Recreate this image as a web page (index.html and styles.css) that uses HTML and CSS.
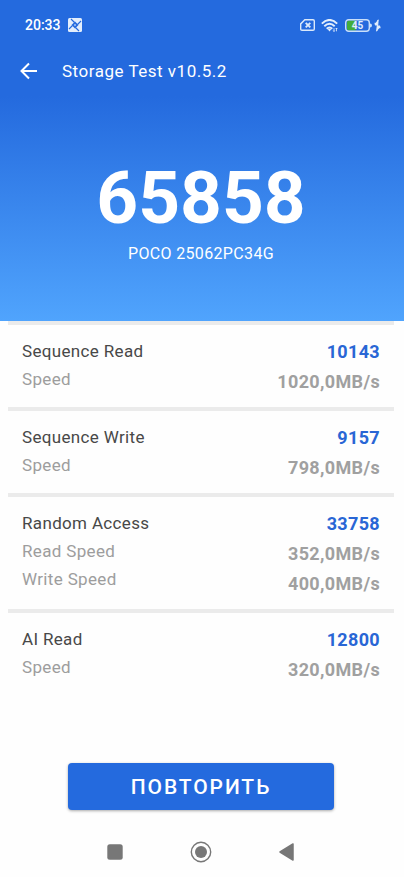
FILE: index.html
```html
<!DOCTYPE html>
<html lang="ru">
<head>
<meta charset="utf-8">
<meta name="viewport" content="width=device-width, initial-scale=1">
<title>Storage Test</title>
<link rel="stylesheet" href="styles.css">
</head>
<body>
<header class="hero">
  <div class="status">
    <div class="status-group">
      <span>20:33</span>
      <svg width="14" height="14" viewBox="0 0 14 14" aria-hidden="true">
        <rect width="14" height="14" rx="1.500" fill="#e3eefc"/>
        <path d="M7 3.500 10.500 7 7 10.500 3.500 7Z" fill="#246ade"/>
        <path d="M3 1 6.500 4.500M13 3 9.500 6.500M11 13 7.500 9.500M1 11 4.500 7.500" stroke="#246ade" stroke-width="1.100"/>
        <path d="M7 5.800 8.200 7 7 8.200 5.800 7Z" fill="#a9c8f5"/>
      </svg>
    </div>
    <div class="status-group status-icons">
      <svg width="15" height="12" viewBox="0 0 15 12" fill="none" stroke="#dbe9fb" aria-hidden="true">
        <path d="M4.800.8H13Q14.300.8 14.300 2V10Q14.300 11.200 13 11.200H2Q.7 11.200.7 10V4.900Z" stroke-width="1.400"/>
        <path d="M5.700 3.800 10.300 8.400M10.300 3.800 5.700 8.400" stroke-width="1.900"/>
      </svg>
      <svg width="18" height="13" viewBox="0 0 18 13" fill="none" stroke="#e3eefc" stroke-width="1.900" aria-hidden="true">
        <path d="M.8 4.600Q8.500-2.800 16.200 4.600M3.300 7.300Q8.500 2.400 13.700 7.300M5.700 9.700Q8.500 7.200 11.300 9.700"/>
        <path d="M6.700 10.300Q8.500 9 10.300 10.300L8.500 12.500Z" fill="#e3eefc" stroke="none"/>
        <path d="M13 9.200V12.500M15.500 9V12.300M12.200 11.500 13 12.500 13.800 11.500M14.700 10 15.500 9 16.300 10" stroke-width=".8"/>
      </svg>
      <svg width="36" height="13" viewBox="0 0 36 13" aria-hidden="true">
        <path d="M4 1.500H11V11.500H4Q2 11.500 2 9.500V3.500Q2 1.500 4 1.500Z" fill="#43ad3c"/>
        <rect x=".7" y=".7" width="23.600" height="11.600" rx="3" fill="none" stroke="#c9dffa" stroke-width="1.400"/>
        <path d="M25 4.500Q27 4.500 27 6.500T25 8.500Z" fill="#c9dffa"/>
        <text class="battery-text" x="12.500" y="10">45</text>
        <path d="M33.200.8 30 6H32.300L31.600 12.200 35 7H32.700Z" fill="#e3eefc" stroke="#e3eefc" stroke-width=".9"/>
        <path d="M29.600 4.500H32M33 8.500H35.500" stroke="#e3eefc" stroke-width="1.300"/>
      </svg>
    </div>
  </div>
  <div class="toolbar">
    <button class="back" type="button" aria-label="Back">
      <svg width="18" height="18" viewBox="0 0 18 18" fill="none" stroke="#fff" stroke-width="2" aria-hidden="true"><path d="M17 9H2M9 1.500 1.500 9 9 16.500"/></svg>
    </button>
    <h1 class="title">Storage Test v10.5.2</h1>
  </div>
  <div class="score">65858</div>
  <div class="device">POCO 25062PC34G</div>
</header>
<main class="results">
  <section class="result">
    <div class="labels"><h2>Sequence Read</h2><p>Speed</p></div>
    <div class="values"><strong>10143</strong><span>1020,0MB/s</span></div>
  </section>
  <section class="result">
    <div class="labels"><h2>Sequence Write</h2><p>Speed</p></div>
    <div class="values"><strong>9157</strong><span>798,0MB/s</span></div>
  </section>
  <section class="result">
    <div class="labels"><h2>Random Access</h2><p>Read Speed</p><p>Write Speed</p></div>
    <div class="values"><strong>33758</strong><span>352,0MB/s</span><span>400,0MB/s</span></div>
  </section>
  <section class="result">
    <div class="labels"><h2>AI Read</h2><p>Speed</p></div>
    <div class="values"><strong>12800</strong><span>320,0MB/s</span></div>
  </section>
</main>
<footer class="footer">
  <button class="repeat" type="button">ПОВТОРИТЬ</button>
  <nav class="system-nav">
    <button type="button" aria-label="Recent apps"><svg width="22" height="22" viewBox="0 0 22 22"><rect x="3.300" y="3.300" width="15.400" height="15.400" rx="2.500" fill="#777"/></svg></button>
    <button type="button" aria-label="Home"><svg width="22" height="22" viewBox="0 0 22 22"><circle cx="11" cy="11" r="9.700" fill="none" stroke="#777" stroke-width="1.400"/><circle cx="11" cy="11" r="6" fill="#777"/></svg></button>
    <button type="button" aria-label="Back"><svg width="22" height="22" viewBox="0 0 22 22"><path d="M4 11 17 3V19Z" fill="#777" stroke="#777" stroke-width="1.500" stroke-linejoin="round"/></svg></button>
  </nav>
</footer>
</body>
</html>
```
FILE: styles.css
```css
* {
  box-sizing: border-box;
}

body {
  display: flex;
  flex-direction: column;
  min-height: 100vh;
  margin: 0;
  background: #fefefe;
  color: #484848;
  font-family: Roboto, sans-serif;
  font-size: 17px;
  letter-spacing: 0.02em;
}

button {
  padding: 0;
  border: 0;
  background: none;
  font: inherit;
}

svg {
  display: block;
}

h1, h2, p {
  margin: 0;
  font-size: inherit;
  font-weight: 400;
}

.hero {
  padding-bottom: 55px;
  background: linear-gradient(#246ade 0, #246ade 30%, #50a4fd 100%);
  color: #fff;
}

.status {
  display: flex;
  align-items: center;
  justify-content: space-between;
  height: 48px;
  padding: 2px 23px 0 25px;
  font-size: 14px;
  font-weight: 500;
  letter-spacing: 0;
}

.status-group {
  display: flex;
  align-items: center;
  gap: 7px;
}

.status-icons {
  gap: 6px;
}

.battery-text {
  fill: #e3eefc;
  font-size: 10px;
  font-weight: 700;
  text-anchor: middle;
}

.toolbar {
  display: flex;
  align-items: center;
  gap: 24px;
  height: 46px;
  padding: 0 20px;
}

.title {
  letter-spacing: 0.03em;
}

.score {
  margin-top: 62px;
  padding-right: 2px;
  font-size: 73px;
  font-weight: 700;
  line-height: 84px;
  letter-spacing: 0;
  text-align: center;
}

.device {
  margin-top: 2px;
  padding-right: 2px;
  font-size: 16px;
  line-height: 24px;
  text-align: center;
}

.results {
  margin: 0 10px 0 8px;
}

.result {
  display: flex;
  justify-content: space-between;
  padding: 12px 14px 10px;
  border-top: 4px solid #ebebeb;
}

.labels {
  line-height: 28px;
}

.labels p {
  color: #9d9d9d;
}

.values {
  display: flex;
  flex-direction: column;
  color: #a0a0a0;
  font-size: 18px;
  font-weight: 700;
  line-height: 30px;
  text-align: right;
}

.values strong {
  color: #2966d5;
  font-weight: 700;
}

.footer {
  margin: auto 10px 0 8px;
}

.repeat {
  display: block;
  width: 69%;
  height: 47px;
  margin: 0 auto;
  border-radius: 4px;
  background: #246ade;
  box-shadow: 0 1px 3px #0005;
  color: #fff;
  font-size: 21px;
  font-weight: 500;
  letter-spacing: 0.09em;
}

.system-nav {
  display: flex;
  justify-content: center;
  gap: 64px;
  padding: 31px 0 14px;
}
```
